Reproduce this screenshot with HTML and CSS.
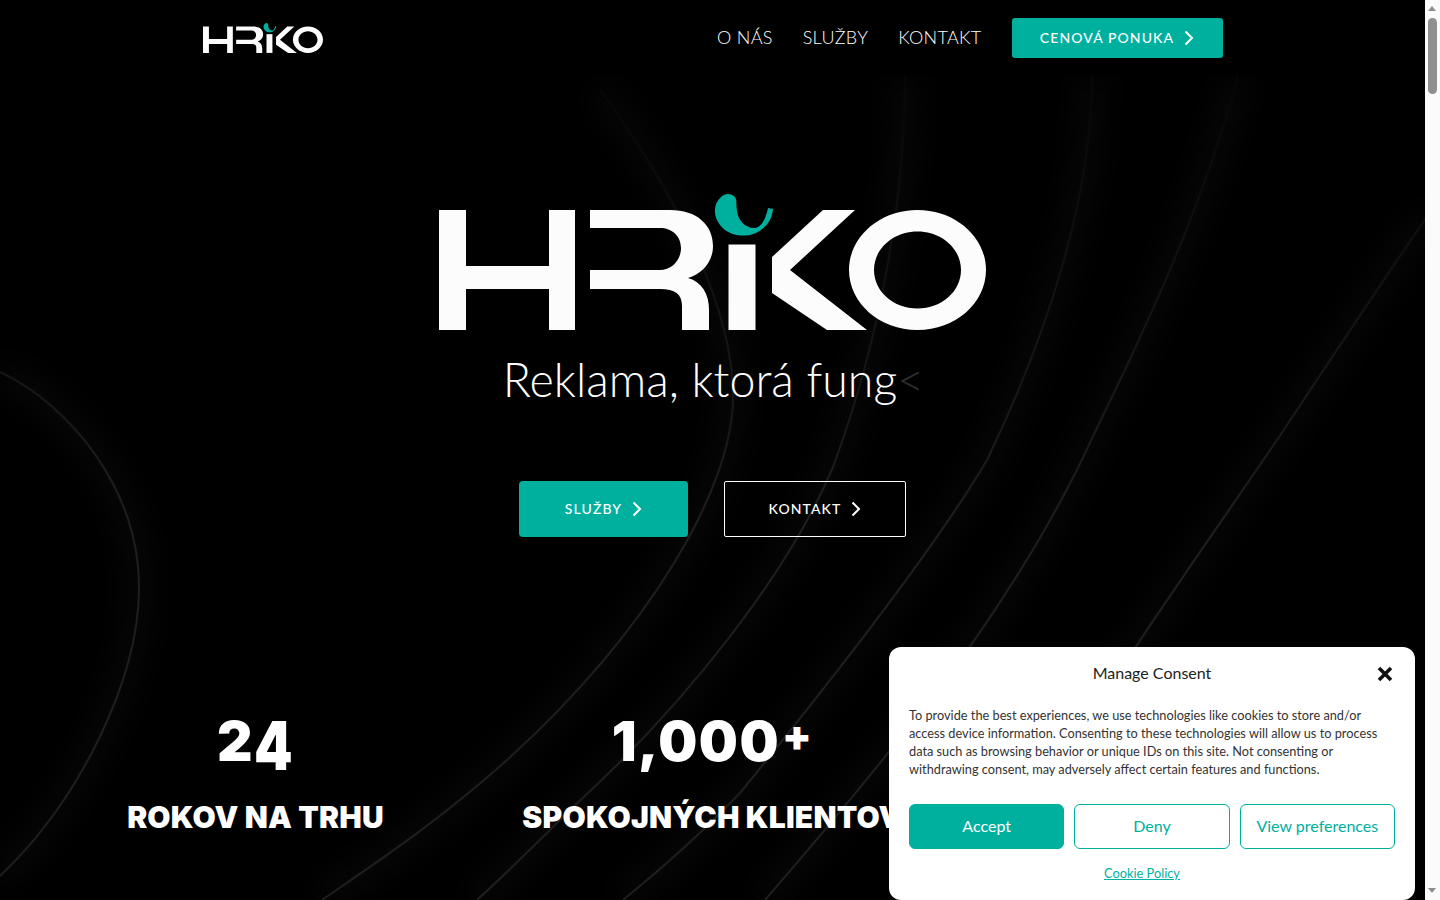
FILE: index.html
```html
<!DOCTYPE html>
<html lang="sk">
<head>
<meta charset="utf-8">
<title>HRIKO – Reklama, ktorá funguje</title>
<link rel="stylesheet" href="styles.css">
</head>
<body>
<svg class="defs" width="0" height="0" aria-hidden="true">
  <defs>
    <symbol id="logo" viewBox="439 194 547 136">
      <path class="logo-white" d="M439 210H466V266H549V210H575V330H549V289H466V330H439Z"/>
      <path class="logo-white" d="M590 210H670C697 210 713 225 713 246C713 262 702 274 688 278C702 282 709 294 709 310V330H682V306C682 294 675 289 660 289H590V270H660C672 270 681 260 681 248C681 236 672 228 660 228H590Z"/>
      <path class="logo-white" d="M728.500 244.500H755.500V330H728.500Z"/>
      <path class="logo-white" d="M823 210H855L790 270L867 330H827L772 293V257Z"/>
      <path class="logo-white" fill-rule="evenodd" d="M917.500 210C955.500 210 986 237 986 270C986 303 955.500 330 917.500 330C879.500 330 849 303 849 270C849 237 879.500 210 917.500 210ZM917.500 231.500C893.500 231.500 874 248.500 874 270C874 291.500 893.500 308.500 917.500 308.500C941.500 308.500 961 291.500 961 270C961 248.500 941.500 231.500 917.500 231.500Z"/>
      <path class="logo-teal" d="M735 197C731 193 725 193 721 197C713 204 713 216 720 225C728 236 745 238 756 233C766 228 772 220 773 209L768 208C766 219 761 228 754 228C745 228 738 220 737 211C736 205 737 200 735 197Z"/>
    </symbol>
    <symbol id="chev" viewBox="0 0 10 16">
      <path d="M1.500 1.500L8 8L1.500 14.500" fill="none" stroke="currentColor" stroke-width="2"/>
    </symbol>
    <linearGradient id="fade" gradientUnits="userSpaceOnUse" x1="0" y1="90" x2="0" y2="520">
      <stop offset="0" stop-color="#070707"/>
      <stop offset="1" stop-color="#1e1e1e"/>
    </linearGradient>
    <filter id="soft" x="-20%" y="-20%" width="140%" height="140%">
      <feGaussianBlur stdDeviation="14"/>
    </filter>
  </defs>
</svg>

<div class="window">
  <main class="page">
    <svg class="curves" viewBox="0 0 1425 900" aria-hidden="true">
      <g class="glow" filter="url(#soft)">
        <path d="M0 372C70 405 140 490 139 590C138 680 80 800 0 876"/>
        <path d="M600 90C660 170 735 300 733 400C731 490 650 630 507 760C440 820 380 860 322 900"/>
        <path d="M905 76C905 200 880 340 833 467C790 570 690 700 573 807C540 840 510 870 477 900"/>
        <path d="M1092 76C1092 200 1045 340 987 460C940 540 840 670 740 793C700 835 660 870 623 900"/>
        <path d="M1238 76C1205 200 1150 320 1094 434C1060 510 1010 590 969 648C905 735 830 825 765 900"/>
        <path d="M1428 215C1380 285 1330 360 1281 434C1240 495 1190 565 1135 648C1070 735 990 820 920 900"/>
      </g>
      <g class="lines">
        <path d="M0 372C70 405 140 490 139 590C138 680 80 800 0 876"/>
        <path d="M600 90C660 170 735 300 733 400C731 490 650 630 507 760C440 820 380 860 322 900"/>
        <path d="M905 76C905 200 880 340 833 467C790 570 690 700 573 807C540 840 510 870 477 900"/>
        <path d="M1092 76C1092 200 1045 340 987 460C940 540 840 670 740 793C700 835 660 870 623 900"/>
        <path d="M1238 76C1205 200 1150 320 1094 434C1060 510 1010 590 969 648C905 735 830 825 765 900"/>
        <path d="M1428 215C1380 285 1330 360 1281 434C1240 495 1190 565 1135 648C1070 735 990 820 920 900"/>
      </g>
    </svg>

    <header class="topbar">
      <div class="topbar-inner">
        <a class="brand" href="#" aria-label="HRIKO"><svg class="brand-logo"><use href="#logo"/></svg></a>
        <nav class="nav">
          <a class="nav-link" href="#">O NÁS</a>
          <a class="nav-link" href="#">SLUŽBY</a>
          <a class="nav-link" href="#">KONTAKT</a>
          <a class="btn btn-cta" href="#">CENOVÁ PONUKA<svg class="chev"><use href="#chev"/></svg></a>
        </nav>
      </div>
    </header>

    <section class="hero">
      <svg class="hero-logo" role="img" aria-label="HRIKO"><use href="#logo"/></svg>
      <h2 class="tagline">Reklama, ktorá fung<span class="caret">&lt;</span></h2>
      <div class="hero-actions">
        <a class="btn btn-solid" href="#">SLUŽBY<svg class="chev"><use href="#chev"/></svg></a>
        <a class="btn btn-outline" href="#">KONTAKT<svg class="chev"><use href="#chev"/></svg></a>
      </div>
      <div class="stats">
        <div class="stat">
          <div class="stat-num">2<span class="drop">4</span></div>
          <div class="stat-label">ROKOV NA TRHU</div>
        </div>
        <div class="stat">
          <div class="stat-num">1,000<span class="plus">+</span></div>
          <div class="stat-label">SPOKOJNÝCH KLIENTOV</div>
        </div>
        <div class="stat"></div>
      </div>
    </section>

    <aside class="consent">
      <div class="consent-title">Manage Consent</div>
      <button class="consent-close" aria-label="Close">
        <svg viewBox="0 0 16 16" width="16" height="16"><path d="M2 2L14 14M14 2L2 14" fill="none" stroke="#111" stroke-width="3.600"/></svg>
      </button>
      <p class="consent-text">To provide the best experiences, we use technologies like cookies to store and/or<br>access device information. Consenting to these technologies will allow us to process<br>data such as browsing behavior or unique IDs on this site. Not consenting or<br>withdrawing consent, may adversely affect certain features and functions.</p>
      <div class="consent-actions">
        <button class="c-btn c-accept">Accept</button>
        <button class="c-btn">Deny</button>
        <button class="c-btn">View preferences</button>
      </div>
      <div class="consent-links"><a href="#">Cookie Policy</a></div>
    </aside>
  </main>

  <div class="scrollbar" aria-hidden="true">
    <span class="sb-up"></span>
    <span class="sb-thumb"></span>
    <span class="sb-down"></span>
  </div>
</div>
</body>
</html>
```
FILE: styles.css
```css
* { box-sizing: border-box; }
html, body { margin: 0; height: 100%; overflow: hidden; }
body { background: #000; color: #fff; font-family: "Lato", "Liberation Sans", sans-serif; }
a { color: inherit; text-decoration: none; }
.defs { display: block; height: 0; }
.logo-white { fill: #fcfcfc; }
.logo-teal { fill: #00b09f; }

.window { display: flex; height: 900px; }
.page { position: relative; flex: 1; min-width: 0; height: 900px; overflow: hidden; background: #000; }

.curves { position: absolute; left: 0; top: 0; width: 1425px; height: 900px; }
.curves path { fill: none; }
.lines path { stroke: url(#fade); stroke-width: 2; }
.glow path { stroke: #fff; stroke-opacity: .03; stroke-width: 22; }

.topbar { position: relative; height: 75px; background: #000; }
.topbar-inner { display: flex; align-items: center; justify-content: space-between; width: 1020px; height: 75px; margin: 0 auto; padding-top: 1px; }
.brand { display: block; height: 30px; }
.brand-logo { display: block; width: 120px; height: 30px; }
.nav { display: flex; align-items: center; gap: 30px; font-size: 18px; font-weight: 300; letter-spacing: .3px; }
.nav-link { margin-top: -2px; }

.btn { display: flex; align-items: center; justify-content: center; padding-bottom: 1px; font-size: 14px; font-weight: 500; letter-spacing: 1.1px; }
.chev { width: 10px; height: 16px; margin-left: 10px; }
.btn-cta { width: 211px; height: 40px; background: #00b09f; border-radius: 3px; }

.hero { position: relative; display: flex; flex-direction: column; align-items: center; padding-top: 119px; }
.hero-logo { display: block; width: 547px; height: 136px; }
.tagline { margin: 22px 0 0; padding-left: 2px; font-size: 46.500px; line-height: 54px; font-weight: 300; text-align: center; }
.caret { color: #2e2e2e; }
.hero-actions { display: flex; gap: 36px; margin-top: 75px; }
.btn-solid { width: 169px; height: 56px; background: #00b09f; border-radius: 4px; }
.btn-outline { width: 182px; height: 56px; border: 1px solid #fff; border-radius: 2px; }

.stats { display: grid; grid-template-columns: repeat(3, 457px); margin-top: 169px; width: 1371px; }
.stat { display: flex; flex-direction: column; align-items: center; white-space: nowrap; }
.stat-num { height: 70px; font-family: "Inter", "Lato", sans-serif; font-size: 55px; line-height: 70px; font-weight: 900; letter-spacing: 1.500px; }
.drop { display: inline-block; transform-origin: 50% 15px; transform: scaleY(1.22); }
.plus { margin-left: 2px; font-size: 43px; line-height: 0; vertical-align: 10px; }
.stat-label { margin-top: 21px; font-family: "Inter", "Lato", sans-serif; font-size: 30px; line-height: 40px; font-weight: 900; letter-spacing: .2px; }

.consent { position: absolute; right: 10px; bottom: 0; width: 526px; height: 253px; padding: 19px 20px 20px; background: #fff; border-radius: 12px; color: #222; }
.consent-title { font-size: 16px; line-height: 14px; text-align: center; }
.consent-close { position: absolute; top: 19px; right: 22px; width: 16px; height: 16px; padding: 0; border: 0; background: none; }
.consent-close svg { display: block; }
.consent-text { margin: 26px 0 0; font-size: 12.750px; line-height: 18px; color: #333; }
.consent-actions { display: flex; justify-content: space-between; gap: 10px; margin-top: 26px; }
.c-btn { flex: 1; height: 45px; padding: 0 0 2px; border: 1px solid #00b09f; border-radius: 6px; background: #fff; color: #00b09f; font: 16px "Lato", sans-serif; }
.c-accept { background: #00b09f; color: #fff; }
.consent-links { margin-top: 16px; padding-right: 20px; text-align: center; font-size: 12.800px; line-height: 16px; }
.consent-links a { color: #00b09f; text-decoration: underline; }

.scrollbar { position: relative; flex: 0 0 15px; height: 900px; background: #fbfbfb; }
.sb-thumb { position: absolute; left: 3px; top: 18px; width: 9px; height: 76px; border-radius: 5px; background: #8f8f8f; }
.sb-up, .sb-down { position: absolute; left: 3px; width: 0; height: 0; border-left: 4.500px solid transparent; border-right: 4.500px solid transparent; }
.sb-up { top: 6px; border-bottom: 5px solid #8f8f8f; }
.sb-down { bottom: 7px; border-top: 5px solid #8f8f8f; }
```
